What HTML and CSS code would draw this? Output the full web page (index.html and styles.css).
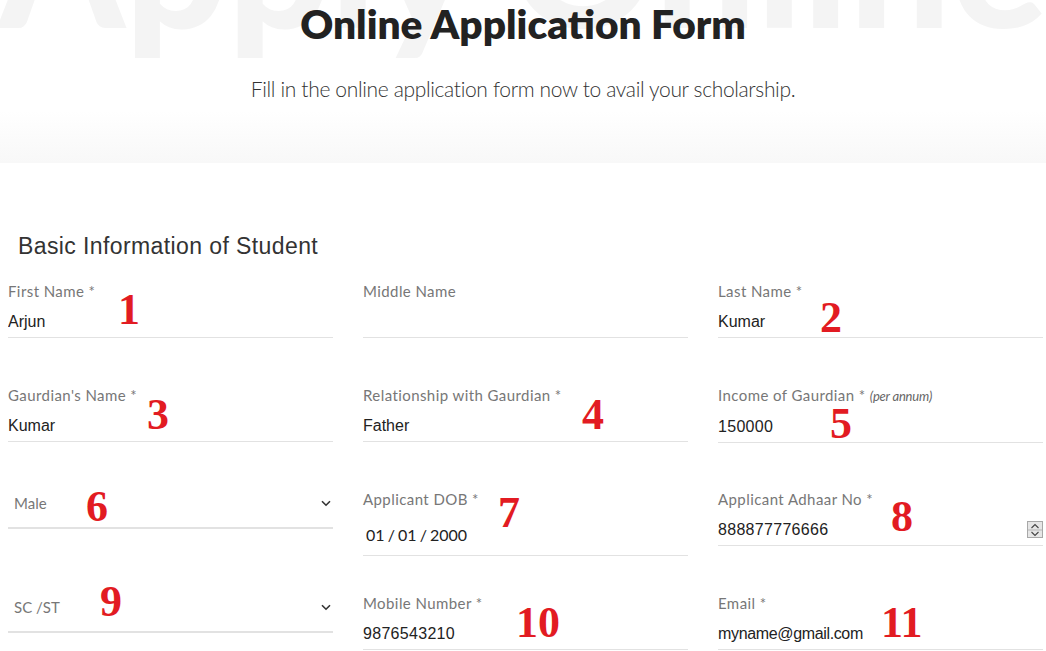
FILE: index.html
```html
<!DOCTYPE html>
<html lang="en">
<head>
<meta charset="utf-8">
<title>Online Application Form</title>
<link rel="stylesheet" href="styles.css">
</head>
<body>
<header class="hero">
  <div class="watermark" aria-hidden="true">Apply Online</div>
  <h1 class="hero-title">Online Application Form</h1>
  <p class="hero-sub">Fill in the online application form now to avail your scholarship.</p>
</header>

<main class="form-wrap">
  <h2 class="section-title">Basic Information of Student</h2>
  <form class="form-grid">
    <div class="field">
      <label class="label">First Name *</label>
      <input class="input" type="text" value="Arjun">
      <span class="mark m1">1</span>
    </div>
    <div class="field">
      <label class="label">Middle Name</label>
      <input class="input" type="text" value="">
    </div>
    <div class="field">
      <label class="label">Last Name *</label>
      <input class="input" type="text" value="Kumar">
      <span class="mark m2">2</span>
    </div>

    <div class="field">
      <label class="label">Gaurdian's Name *</label>
      <input class="input" type="text" value="Kumar">
      <span class="mark m3">3</span>
    </div>
    <div class="field">
      <label class="label">Relationship with Gaurdian *</label>
      <input class="input" type="text" value="Father">
      <span class="mark m4">4</span>
    </div>
    <div class="field">
      <label class="label">Income of Gaurdian * <em class="hint">(per annum)</em></label>
      <input class="input num" type="text" value="150000">
      <span class="mark m5">5</span>
    </div>

    <div class="field">
      <div class="select">
        <span class="select-text">Male</span>
        <svg class="chev" width="10" height="7" viewBox="0 0 10 7"><path d="M1 1.2 L5 5.2 L9 1.2" fill="none" stroke="#333" stroke-width="1.6"/></svg>
      </div>
      <span class="mark m6">6</span>
    </div>
    <div class="field">
      <label class="label">Applicant DOB *</label>
      <input class="input date" type="text" value="01 / 01 / 2000">
      <span class="mark m7">7</span>
    </div>
    <div class="field">
      <label class="label">Applicant Adhaar No *</label>
      <div class="num-row">
        <input class="input bare num" type="text" value="888877776666">
        <span class="spinner">
          <svg width="14" height="16" viewBox="0 0 14 16"><path d="M3.5 6 L7 2.5 L10.5 6 M3.5 10 L7 13.5 L10.5 10" fill="none" stroke="#444" stroke-width="1.1"/><path d="M0 8 H14" stroke="#b5b5b5" stroke-width="1"/></svg>
        </span>
      </div>
      <span class="mark m8">8</span>
    </div>

    <div class="field">
      <div class="select">
        <span class="select-text">SC /ST</span>
        <svg class="chev" width="10" height="7" viewBox="0 0 10 7"><path d="M1 1.2 L5 5.2 L9 1.2" fill="none" stroke="#333" stroke-width="1.6"/></svg>
      </div>
      <span class="mark m9">9</span>
    </div>
    <div class="field">
      <label class="label">Mobile Number *</label>
      <input class="input num" type="text" value="9876543210">
      <span class="mark m10">10</span>
    </div>
    <div class="field">
      <label class="label">Email *</label>
      <input class="input email" type="text" value="myname@gmail.com">
      <span class="mark m11">11</span>
    </div>
  </form>
</main>
</body>
</html>
```

FILE: styles.css
```css
* { box-sizing: border-box; }

html, body {
  margin: 0;
  padding: 0;
  background: #ffffff;
  overflow: hidden;
}

body {
  font-family: Lato, "Open Sans", Arial, sans-serif;
  color: #222;
}

.hero {
  position: relative;
  height: 163px;
  overflow: hidden;
  text-align: center;
  background: linear-gradient(to bottom, #ffffff 0%, #ffffff 68%, #f8f8f8 100%);
}

.watermark {
  position: absolute;
  left: 50%;
  top: -132px;
  transform: translateX(-50%);
  white-space: nowrap;
  font-family: Lato, sans-serif;
  font-weight: 900;
  font-size: 180px;
  line-height: 1;
  color: #f4f4f4;
  z-index: 0;
}

.hero-title {
  position: relative;
  z-index: 1;
  margin: 0;
  font-family: Lato, sans-serif;
  font-weight: 800;
  font-size: 40.6px;
  line-height: 48px;
  color: #222;
}

.hero-sub {
  position: relative;
  z-index: 1;
  margin: 28px 0 0;
  font-family: Lato, sans-serif;
  font-weight: 300;
  font-size: 21px;
  line-height: 25px;
  letter-spacing: -0.35px;
  color: #333;
}

.form-wrap {
  padding: 71px 0 0 8px;
}

.section-title {
  margin: 0 0 22px 10px;
  font-family: "Liberation Sans", Arial, sans-serif;
  font-weight: 400;
  font-size: 23px;
  line-height: 25px;
  letter-spacing: 0.4px;
  color: #333;
}

.form-grid {
  display: grid;
  grid-template-columns: 325px 325px 325px;
  grid-auto-rows: 104px;
  column-gap: 30px;
  margin: 0;
}

.field {
  position: relative;
}

.label {
  display: block;
  font-family: Lato, sans-serif;
  font-size: 15px;
  line-height: 20px;
  letter-spacing: 0.42px;
  color: #777;
}

.hint {
  font-size: 13px;
  letter-spacing: -0.2px;
  color: #666;
}

.input {
  display: block;
  width: 100%;
  height: 37px;
  margin: 0;
  padding: 5px 0 0;
  border: 0;
  border-bottom: 1px solid #e2e2e2;
  outline: none;
  background: transparent;
  font-family: "Liberation Sans", Arial, sans-serif;
  font-size: 16px;
  color: #222;
}

.input.num {
  letter-spacing: 0.3px;
}

.input.email {
  letter-spacing: -0.35px;
}

.input.date {
  height: 47px;
  padding: 4px 0 0 3px;
  font-family: Lato, sans-serif;
  font-size: 16px;
  word-spacing: -1px;
}

.num-row {
  display: flex;
  align-items: center;
  height: 37px;
  border-bottom: 1px solid #e2e2e2;
}

.input.bare {
  flex: 1;
  height: 36px;
  border-bottom: 0;
}

.spinner {
  display: flex;
  width: 16px;
  height: 17px;
  margin-top: 4px;
  border: 1px solid #a8a8a8;
  background: #e6e6e6;
}

.select {
  display: flex;
  align-items: flex-start;
  justify-content: space-between;
  height: 40px;
  padding: 4px 2px 0 6px;
  border-bottom: 2px solid #e2e2e2;
}

.select-text {
  font-family: Lato, sans-serif;
  font-size: 15px;
  line-height: 20px;
  color: #777;
}

.chev {
  margin-top: 7px;
}

.mark {
  position: absolute;
  font-family: "Liberation Serif", "Times New Roman", serif;
  font-weight: 700;
  font-size: 44px;
  line-height: 30px;
  color: #e21b22;
  pointer-events: none;
}

.m1 { left: 110px; top: 14px; }
.m2 { left: 102px; top: 22px; }
.m3 { left: 139px; top: 15px; }
.m4 { left: 219px; top: 15px; }
.m5 { left: 112px; top: 24px; }
.m6 { left: 78px; top: 3px; }
.m7 { left: 135px; top: 9px; }
.m8 { left: 173px; top: 13px; }
.m9 { left: 92px; top: -6px; }
.m10 { left: 153px; top: 15px; }
.m11 { left: 163px; top: 15px; }
```
